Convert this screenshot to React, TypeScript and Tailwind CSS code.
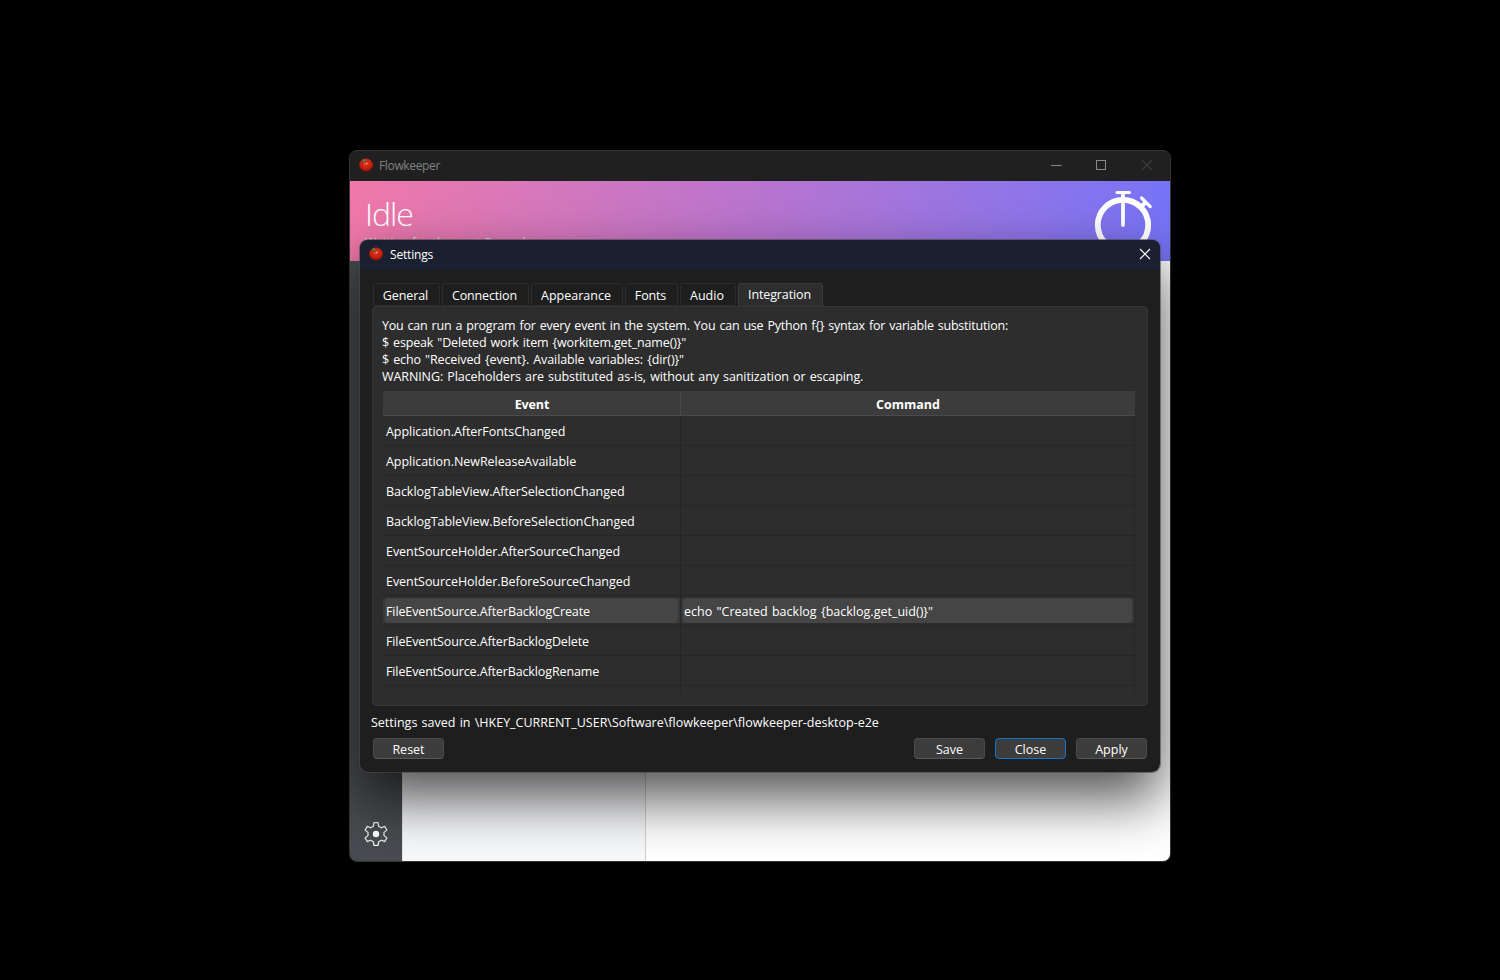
import { type ReactNode } from 'react';

const tabs = [
  { label: 'General', className: 'w-[67px] mr-0.5 tracking-[-0.1px]' },
  { label: 'Connection', className: 'w-[87px] mr-0.5 tracking-[-0.16px]' },
  { label: 'Appearance', className: 'w-[92px] mr-0.5' },
  { label: 'Fonts', className: 'w-[53px] mr-0.5 tracking-[-0.15px]' },
  { label: 'Audio', className: 'w-[56px] mr-0.5' },
];

const events = [
  { name: 'Application.AfterFontsChanged', command: '' },
  { name: 'Application.NewReleaseAvailable', command: '' },
  { name: 'BacklogTableView.AfterSelectionChanged', command: '' },
  { name: 'BacklogTableView.BeforeSelectionChanged', command: '' },
  { name: 'EventSourceHolder.AfterSourceChanged', command: '' },
  { name: 'EventSourceHolder.BeforeSourceChanged', command: '' },
  { name: 'FileEventSource.AfterBacklogCreate', command: 'echo "Created backlog {backlog.get_uid()}"' },
  { name: 'FileEventSource.AfterBacklogDelete', command: '' },
  { name: 'FileEventSource.AfterBacklogRename', command: '' },
];

function Tomato() {
  return (
    <svg width="14" height="14" viewBox="0 0 14 14" className="shrink-0">
      <defs>
        <radialGradient id="tomato" cx="0.5" cy="0.35" r="0.65">
          <stop offset="0" stopColor="#e2331f" />
          <stop offset="0.65" stopColor="#c4200f" />
          <stop offset="1" stopColor="#8c0e08" />
        </radialGradient>
      </defs>
      <ellipse cx="7" cy="7" rx="6.8" ry="6.5" fill="url(#tomato)" />
      <path d="M1.8 3.2 4 2.4 5 0.8 6 2 8 1.8 6.6 3.2 6.6 4.8 4.9 4 3.2 5 3.4 3.7Z" fill="#5c5a2c" />
      <path d="M4.2 1.4 5.6 3" stroke="#b5b898" strokeWidth="0.8" />
      <circle cx="7.8" cy="5.6" r="0.8" fill="#ffc0ae" />
      <circle cx="5.8" cy="6.2" r="0.6" fill="#f08a76" />
    </svg>
  );
}

function CloseGlyph({ className }: { className: string }) {
  return (
    <svg width="12" height="12" viewBox="0 0 12 12" className={className}>
      <path d="M1 1 11 11M11 1 1 11" stroke="currentColor" strokeWidth="1.1" fill="none" />
    </svg>
  );
}

function Stopwatch() {
  return (
    <svg width="60" height="70" viewBox="0 0 60 70" fill="none" stroke="#fff" strokeLinecap="round">
      <circle cx="29" cy="35" r="25.2" strokeWidth="5.8" />
      <path d="M23 2.5H35.5" strokeWidth="3" />
      <path d="M29 3V35" strokeWidth="3.8" />
      <path d="M47.6 8 56.2 16.6" strokeWidth="3.2" />
      <path d="M51.7 12.3 47.4 16.5" strokeWidth="4.4" strokeLinecap="butt" />
    </svg>
  );
}

function Gear() {
  return (
    <svg width="26" height="26" viewBox="0 0 26 26" fill="none" stroke="#f0f0f0" strokeWidth="1.2" strokeLinejoin="round">
      <path d="M10.9 1.6H15.1L15.6 5.2L18.3 6.8L21.7 5.4L23.9 9.1L21 11.4V14.6L23.9 16.9L21.7 20.6L18.3 19.2L15.6 20.8L15.1 24.4H10.9L10.4 20.8L7.7 19.2L4.3 20.6L2.1 16.9L5 14.6V11.4L2.1 9.1L4.3 5.4L7.7 6.8L10.4 5.2Z" />
      <circle cx="13" cy="13" r="3.2" fill="#fff" stroke="none" />
    </svg>
  );
}

function Button({ children, primary = false }: { children: ReactNode; primary?: boolean }) {
  return (
    <button
      className={
        primary
          ? 'flex h-[21px] w-[71px] items-center justify-center rounded-[4px] border border-[#1277cc] bg-[#3c3c3c] pt-[3px]'
          : 'flex h-[21px] w-[71px] items-center justify-center rounded-[4px] border border-[#4b4b4b] border-b-[#585858] bg-[#3c3c3c] pt-[3px]'
      }
    >
      {children}
    </button>
  );
}

function MainWindow() {
  return (
    <div className="absolute top-[150px] left-[349px] flex h-[712px] w-[822px] flex-col overflow-hidden rounded-lg border border-[#363636] bg-[#202020]">
      <div className="flex h-[30px] shrink-0 items-center pb-0.5 pl-[9px] text-[#808080]">
        <Tomato />
        <span className="ml-1.5 pt-px text-[12px] tracking-[-0.35px]">Flowkeeper</span>
        <div className="ml-auto flex items-center pr-[17px]">
          <svg width="12" height="12" viewBox="0 0 12 12" className="mr-[33px]">
            <path d="M1 6.5H11.5" stroke="#8a8a8a" />
          </svg>
          <svg width="12" height="12" viewBox="0 0 12 12" className="mr-[34px]">
            <rect x="1.5" y="1.5" width="9" height="9" stroke="#8a8a8a" fill="none" />
          </svg>
          <CloseGlyph className="text-[#3c3c3c]" />
        </div>
      </div>
      <div className="flex h-20 shrink-0 justify-between bg-linear-to-r from-[#f078a9] via-[#b874cf] to-[#7673f7] pt-[9px] pr-4 pl-[15px] text-white">
        <div className="pt-[5px]">
          <div className="text-[32px] leading-[38px] font-light tracking-[-1px]">Idle</div>
          <div className="pt-px text-[12px] leading-[18px] tracking-[0.1px] text-[#ddd] [word-spacing:1px]">Waiting for the next Pomodoro</div>
        </div>
        <Stopwatch />
      </div>
      <div className="flex flex-1">
        <div className="flex w-[52px] flex-col items-center justify-end bg-[#484b4f] pb-[14px]">
          <Gear />
        </div>
        <div className="w-[244px] border-x border-l-[#e4e4e4] border-r-[#d2d2d2] bg-[#f8f9fb]" />
        <div className="flex-1 bg-white" />
      </div>
    </div>
  );
}

function EventTable() {
  return (
    <div className="mx-2.5 mt-[6px] h-[302px] w-[752px] overflow-hidden">
      <div className="flex h-[25px] border-b border-[#4a4a4a] bg-[#3c3c3c] font-bold text-white">
        <div className="flex w-[298px] items-center justify-center border-r border-[#4a4a4a] pt-1 pl-px tracking-[-0.1px]">Event</div>
        <div className="flex flex-1 items-center justify-center pt-1">Command</div>
      </div>
      {events.map(({ name, command }) => (
        <div key={name} className="flex h-[30px]">
          <div className="flex w-[298px] items-start border-r border-b border-[#262626]">
            {command ? (
              <div className="mt-0.5 flex h-[25px] w-full bg-[#383838] px-0.5">
                <div className="flex flex-1 items-center rounded-[4px] bg-[#454545] pt-[3px] pl-px tracking-[-0.11px]">{name}</div>
              </div>
            ) : (
              <span className={name.startsWith('File') ? 'pt-[7px] pl-[3px] tracking-[-0.12px]' : 'pt-[7px] pl-[3px] tracking-[-0.05px]'}>{name}</span>
            )}
          </div>
          <div className="flex flex-1 items-start border-r border-b border-[#262626]">
            {command && (
              <div className="mt-0.5 flex h-[25px] w-full bg-[#383838] px-0.5">
                <div className="flex flex-1 items-center rounded-[4px] bg-[#454545] pt-[3px] pl-px tracking-[0.015px] [word-spacing:1px]">{command}</div>
              </div>
            )}
          </div>
        </div>
      ))}
      <div className="flex h-[7px]">
        <div className="w-[298px] border-r border-[#262626]" />
        <div className="flex-1 border-r border-[#262626]" />
      </div>
    </div>
  );
}

function SettingsDialog() {
  return (
    <div className="absolute top-[239px] left-[359px] flex h-[534px] w-[802px] flex-col overflow-hidden rounded-[9px] border border-[#4a4a4a]/60 bg-[#1e1e1e] bg-clip-padding text-[12.5px] text-white shadow-[0_26px_56px_rgba(0,0,0,0.68)]">
      <div className="flex h-[30px] shrink-0 items-center bg-[#1b2030] pb-0.5 pl-[9px]">
        <Tomato />
        <span className="ml-[7px] pt-0.5 text-[12px] tracking-[-0.18px]">Settings</span>
        <CloseGlyph className="mr-[9px] ml-auto text-white" />
      </div>
      <div className="flex items-end px-[13px] pt-[13px]">
        {tabs.map(({ label, className }) => (
          <div key={label} className={`flex h-[23px] items-center justify-center rounded-t-[3px] border border-[#2d2d2d] pt-[4px] pr-[2px] ${className}`}>
            {label}
          </div>
        ))}
        <div className="flex h-[23px] w-[85px] items-center justify-center rounded-t-[3px] border border-b-0 border-[#3b3b3b] bg-[#2d2d2d] pr-[2px] tracking-[-0.12px]">Integration</div>
      </div>
      <div className="ml-3 h-[400px] w-[776px] shrink-0 rounded-[4px] border border-[#353535] bg-[#2d2d2d]">
        <div className="pt-[10px] pl-[9px] leading-[17px] whitespace-nowrap [word-spacing:1px]">
          <p className="tracking-[-0.21px]">You can run a program for every event in the system. You can use Python f{'{}'} syntax for variable substitution:</p>
          <p className="tracking-[-0.16px]">$ espeak "Deleted work item {'{workitem.get_name()}'}"</p>
          <p className="tracking-[-0.11px]">$ echo "Received {'{event}'}. Available variables: {'{dir()}'}"</p>
          <p className="tracking-[-0.09px]">WARNING: Placeholders are substituted as-is, without any sanitization or escaping.</p>
        </div>
        <EventTable />
      </div>
      <div className="mt-2 pl-[11px] leading-[17px] [word-spacing:1px]">
        {'Settings saved in \\HKEY_CURRENT_USER\\Software\\flowkeeper\\flowkeeper-desktop-e2e'}
      </div>
      <div className="mt-[7px] flex pr-[13px] pl-[13px]">
        <Button>Reset</Button>
        <div className="ml-auto flex gap-2.5">
          <Button>Save</Button>
          <Button primary>Close</Button>
          <Button>Apply</Button>
        </div>
      </div>
    </div>
  );
}

export default function App() {
  return (
    <div className="relative h-[980px] w-[1500px] overflow-hidden bg-black font-['Open_Sans','Noto_Sans',sans-serif]">
      <MainWindow />
      <SettingsDialog />
    </div>
  );
}
